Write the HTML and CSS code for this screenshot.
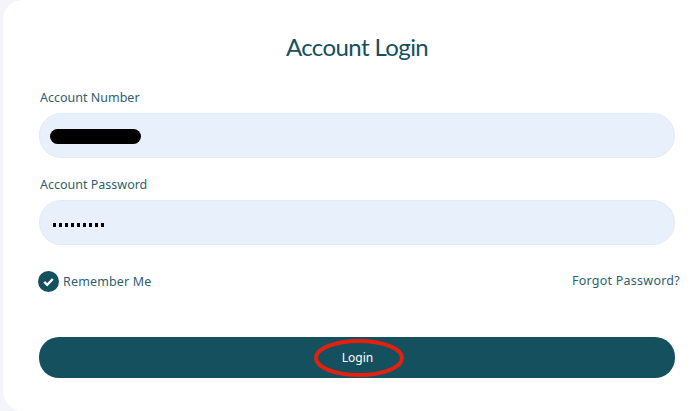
FILE: index.html
```html
<!DOCTYPE html>
<html lang="en">
<head>
    <meta charset="UTF-8">
    <meta name="viewport" content="width=device-width, initial-scale=1.0">
    <title>Account Login</title>
    <link rel="stylesheet" href="styles.css">
</head>
<body>
    <div class="login-card">
        <h1 class="login-title">Account Login</h1>

        <form class="login-form">
            <div class="field">
                <label class="field-label">Account Number</label>
                <div class="field-input">
                    <span class="redacted"></span>
                </div>
            </div>

            <div class="field">
                <label class="field-label">Account Password</label>
                <div class="field-input">
                    <span class="password-dots">
                        <i></i><i></i><i></i><i></i><i></i><i></i><i></i><i></i><i></i>
                    </span>
                </div>
            </div>

            <div class="options-row">
                <label class="remember">
                    <svg class="remember-check" viewBox="0 0 21 21" width="21" height="21">
                        <circle cx="10.5" cy="10.5" r="10.5" fill="#15505e"/>
                        <path d="M6.2 10.8l3 3 5.6-5.8" fill="none" stroke="#fff" stroke-width="2.4"/>
                    </svg>
                    Remember Me
                </label>
                <a href="#" class="forgot-link">Forgot Password?</a>
            </div>

            <button type="button" class="login-btn">
                Login
                <svg class="login-circle" viewBox="0 0 90 38" width="90" height="38">
                    <ellipse cx="45" cy="19" rx="43" ry="17" fill="none" stroke="#e6200e" stroke-width="4"/>
                </svg>
            </button>
        </form>
    </div>
</body>
</html>
```

FILE: styles.css
```css
* {
    margin: 0;
    padding: 0;
    box-sizing: border-box;
}

body {
    font-family: "Noto Sans", "Open Sans", sans-serif;
    background: #f3f5fa;
    color: #2f5f6c;
    height: 411px;
    overflow: hidden;
    padding-left: 3px;
}

.login-card {
    background: white;
    height: 411px;
    border-radius: 20px 0 0 20px;
    padding: 31px 20px 0 36px;
}

.login-title {
    font-family: Lato, "Noto Sans", sans-serif;
    font-size: 24px;
    font-weight: 400;
    line-height: 32px;
    letter-spacing: -0.6px;
    text-align: center;
    color: #15505e;
    margin-bottom: 23px;
}

.field {
    margin-bottom: 15px;
}

.field-label {
    display: block;
    font-size: 12.5px;
    line-height: 24px;
    margin-bottom: 3px;
    padding-left: 1px;
}

.field-input {
    height: 45px;
    background: #e8f0fb;
    border-radius: 22px;
    border: 1px solid #e3ebf7;
    display: flex;
    align-items: center;
    padding-left: 10px;
}

.redacted {
    width: 91px;
    height: 15px;
    background: black;
    border-radius: 8px;
    margin-top: 1px;
}

.password-dots {
    display: flex;
    gap: 3px;
    padding-left: 3px;
    padding-top: 4px;
}

.password-dots i {
    width: 3px;
    height: 4px;
    background: black;
}

.options-row {
    display: flex;
    justify-content: space-between;
    align-items: flex-start;
    margin-top: 26px;
    margin-right: -5px;
    height: 66px;
    font-size: 12.5px;
    letter-spacing: 0.15px;
}

.remember {
    display: flex;
    align-items: center;
    gap: 4px;
    margin-left: -1px;
}

.remember-check {
    display: block;
}

.forgot-link {
    color: #2f5f6c;
    text-decoration: none;
    margin-top: 1px;
    letter-spacing: 0.25px;
}

.login-btn {
    position: relative;
    display: block;
    width: 100%;
    height: 41px;
    background: #15505e;
    color: white;
    border: none;
    border-radius: 20px;
    font-family: inherit;
    font-size: 12px;
    padding-left: 1px;
}

.login-circle {
    position: absolute;
    top: 2px;
    left: 275px;
}
```
